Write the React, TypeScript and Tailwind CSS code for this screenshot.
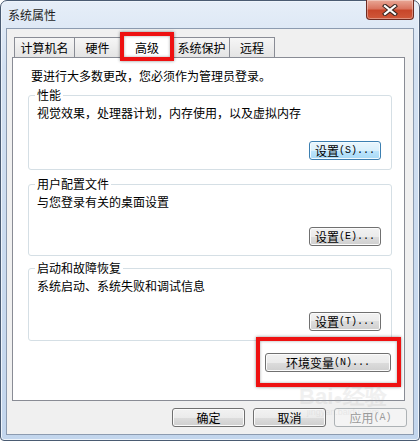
import type { ReactNode } from "react";

const cjk = "font-['Noto_Sans_CJK_SC','Noto_Sans',sans-serif]";

function Latin({ children }: { children: ReactNode }) {
  return (
    <span className="font-['Liberation_Mono',monospace] text-[10px]">
      {children}
    </span>
  );
}

function WinButton({
  children,
  hot,
  disabled,
  className,
}: {
  children: ReactNode;
  hot?: boolean;
  disabled?: boolean;
  className?: string;
}) {
  const look = disabled
    ? "border-[#adb2b5] bg-[#f4f4f4] text-[#9a9a9a]"
    : hot
      ? "border-[#3c7fb1] bg-[linear-gradient(to_bottom,#eaf6fd_0%,#d9f0fc_50%,#bee6fd_50%,#a7d9f5_100%)] text-black shadow-[inset_0_0_0_1px_#f2fbff]"
      : "border-[#707070] bg-[linear-gradient(to_bottom,#f2f2f2_0%,#ebebeb_50%,#dddddd_50%,#cfcfcf_100%)] text-black shadow-[inset_0_0_0_1px_#fbfbfb]";
  return (
    <div
      className={`flex h-[19px] items-center justify-center rounded-[3px] border text-[12px] leading-none ${look} ${className ?? ""}`}
    >
      {children}
    </div>
  );
}

function GroupBox({
  title,
  desc,
  button,
  height,
  className,
}: {
  title: string;
  desc: string;
  button: ReactNode;
  height: string;
  className?: string;
}) {
  return (
    <div
      className={`relative flex flex-col rounded-[3px] border border-[#d5dfe5] ${height} ${className ?? ""}`}
    >
      <span className="absolute -top-[8px] left-[6px] bg-white px-[2px] text-[12px] leading-[14px]">
        {title}
      </span>
      <p className="pl-[8px] pt-[10px] text-[12px] leading-[14px]">{desc}</p>
      <div className="mt-auto flex justify-end pb-[9px] pr-[10px]">{button}</div>
    </div>
  );
}

function Tab({
  label,
  width,
  first,
}: {
  label: string;
  width: string;
  first?: boolean;
}) {
  return (
    <div
      className={`flex h-[20px] items-center justify-center border border-b-0 border-[#898c95] bg-[linear-gradient(to_bottom,#f6f6f6,#e4e4e4)] text-[12px] ${width} ${first ? "" : "-ml-px"}`}
    >
      {label}
    </div>
  );
}

function RedBox({ className }: { className: string }) {
  return (
    <div
      className={`pointer-events-none absolute border-[4px] border-[#ee1111] shadow-[0_0_3px_rgba(0,0,0,0.45),inset_0_0_3px_rgba(0,0,0,0.35)] ${className}`}
    />
  );
}

export default function App() {
  return (
    <div className={`h-[442px] w-[420px] bg-white text-black ${cjk}`}>
      <div className="relative flex h-[441px] w-[420px] flex-col rounded-t-[7px] rounded-b-[4px] border border-[#4a5b72] bg-[linear-gradient(to_bottom,#e6eef8_0%,#d3e1f2_15%,#c3d6ed_100%)] px-[5px] pb-[5px] shadow-[inset_0_0_0_1px_#eef4fb]">
        {/* title bar */}
        <div className="flex h-[27px] shrink-0 items-center pl-[2px] text-[12px] text-[#1e1e1e]">
          系统属性
        </div>
        <div className="absolute -top-px right-[5px] flex h-[20px] w-[48px] items-center justify-center rounded-b-[4px] border border-t-0 border-[#6d2b22] bg-[linear-gradient(to_bottom,#e9a897_0%,#da7560_45%,#c8462a_55%,#d0583a_100%)] shadow-[inset_0_0_0_1px_rgba(255,255,255,0.35)]">
          <svg width="16" height="12" viewBox="0 0 16 12">
            <path
              d="M3 2 L13 10 M13 2 L3 10"
              stroke="#3a2620"
              strokeWidth="4.2"
              strokeLinecap="square"
            />
            <path
              d="M3 2 L13 10 M13 2 L3 10"
              stroke="#ffffff"
              strokeWidth="2.2"
              strokeLinecap="square"
            />
          </svg>
        </div>

        {/* client area */}
        <div className="flex flex-1 flex-col border border-[#8c9bb0] bg-[#f0f0f0]">
          <div className="ml-[7px] mr-[8px] mt-[6px] flex h-[22px] items-end">
            <Tab label="计算机名" width="w-[61px]" first />
            <Tab label="硬件" width="w-[47px]" />
            <div className="relative z-10 -mb-px -ml-px flex h-[23px] w-[54px] items-center justify-center border border-b-0 border-[#898c95] bg-white pt-[1px] text-[12px]">
              高级
              <RedBox className="-bottom-[3px] -left-[1px] -right-[1px] -top-[4px]" />
            </div>
            <Tab label="系统保护" width="w-[57px]" />
            <Tab label="远程" width="w-[46px]" />
          </div>

          {/* tab page */}
          <div className="ml-[5px] mr-[8px] flex h-[344px] flex-col border border-[#898c95] bg-white pl-[15px] pr-[12px]">
            <p className="ml-[3px] pt-[11px] text-[12px] leading-[14px]">
              要进行大多数更改，您必须作为管理员登录。
            </p>
            <GroupBox
              className="mt-[12px]"
              height="h-[75px]"
              title="性能"
              desc="视觉效果，处理器计划，内存使用，以及虚拟内存"
              button={
                <WinButton hot className="w-[72px]">
                  设置<Latin>(S)...</Latin>
                </WinButton>
              }
            />
            <GroupBox
              className="mt-[14px]"
              height="h-[72px]"
              title="用户配置文件"
              desc="与您登录有关的桌面设置"
              button={
                <WinButton className="w-[72px]">
                  设置<Latin>(E)...</Latin>
                </WinButton>
              }
            />
            <GroupBox
              className="mt-[12px]"
              height="h-[73px]"
              title="启动和故障恢复"
              desc="系统启动、系统失败和调试信息"
              button={
                <WinButton className="w-[72px]">
                  设置<Latin>(T)...</Latin>
                </WinButton>
              }
            />
            <div className="mt-[12px] flex justify-end pr-[1px]">
              <div className="relative">
                <WinButton className="w-[126px]">
                  环境变量<Latin>(N)...</Latin>
                </WinButton>
                <RedBox className="-bottom-[15px] -left-[9px] -right-[10px] -top-[16px]" />
              </div>
            </div>
          </div>

          {/* footer buttons */}
          <div className="relative mt-[7px] flex justify-end gap-[8px] pr-[6px]">
            <WinButton className="w-[73px]">确定</WinButton>
            <WinButton className="w-[73px]">取消</WinButton>
            <WinButton disabled className="w-[73px]">
              应用<Latin>(A)</Latin>
            </WinButton>
            {/* faint watermark */}
            <div className="pointer-events-none absolute -top-[22px] right-[26px] flex flex-col items-center leading-none text-[#9a9a9a] opacity-[0.14]">
              <span className="font-['Liberation_Sans',sans-serif] text-[22px] font-bold">
                Bai<span className="text-[16px]">●</span>经验
              </span>
              <span className="font-['Liberation_Sans',sans-serif] text-[9px]">
                jingyan.baidu.com
              </span>
            </div>
          </div>
        </div>
      </div>
    </div>
  );
}
